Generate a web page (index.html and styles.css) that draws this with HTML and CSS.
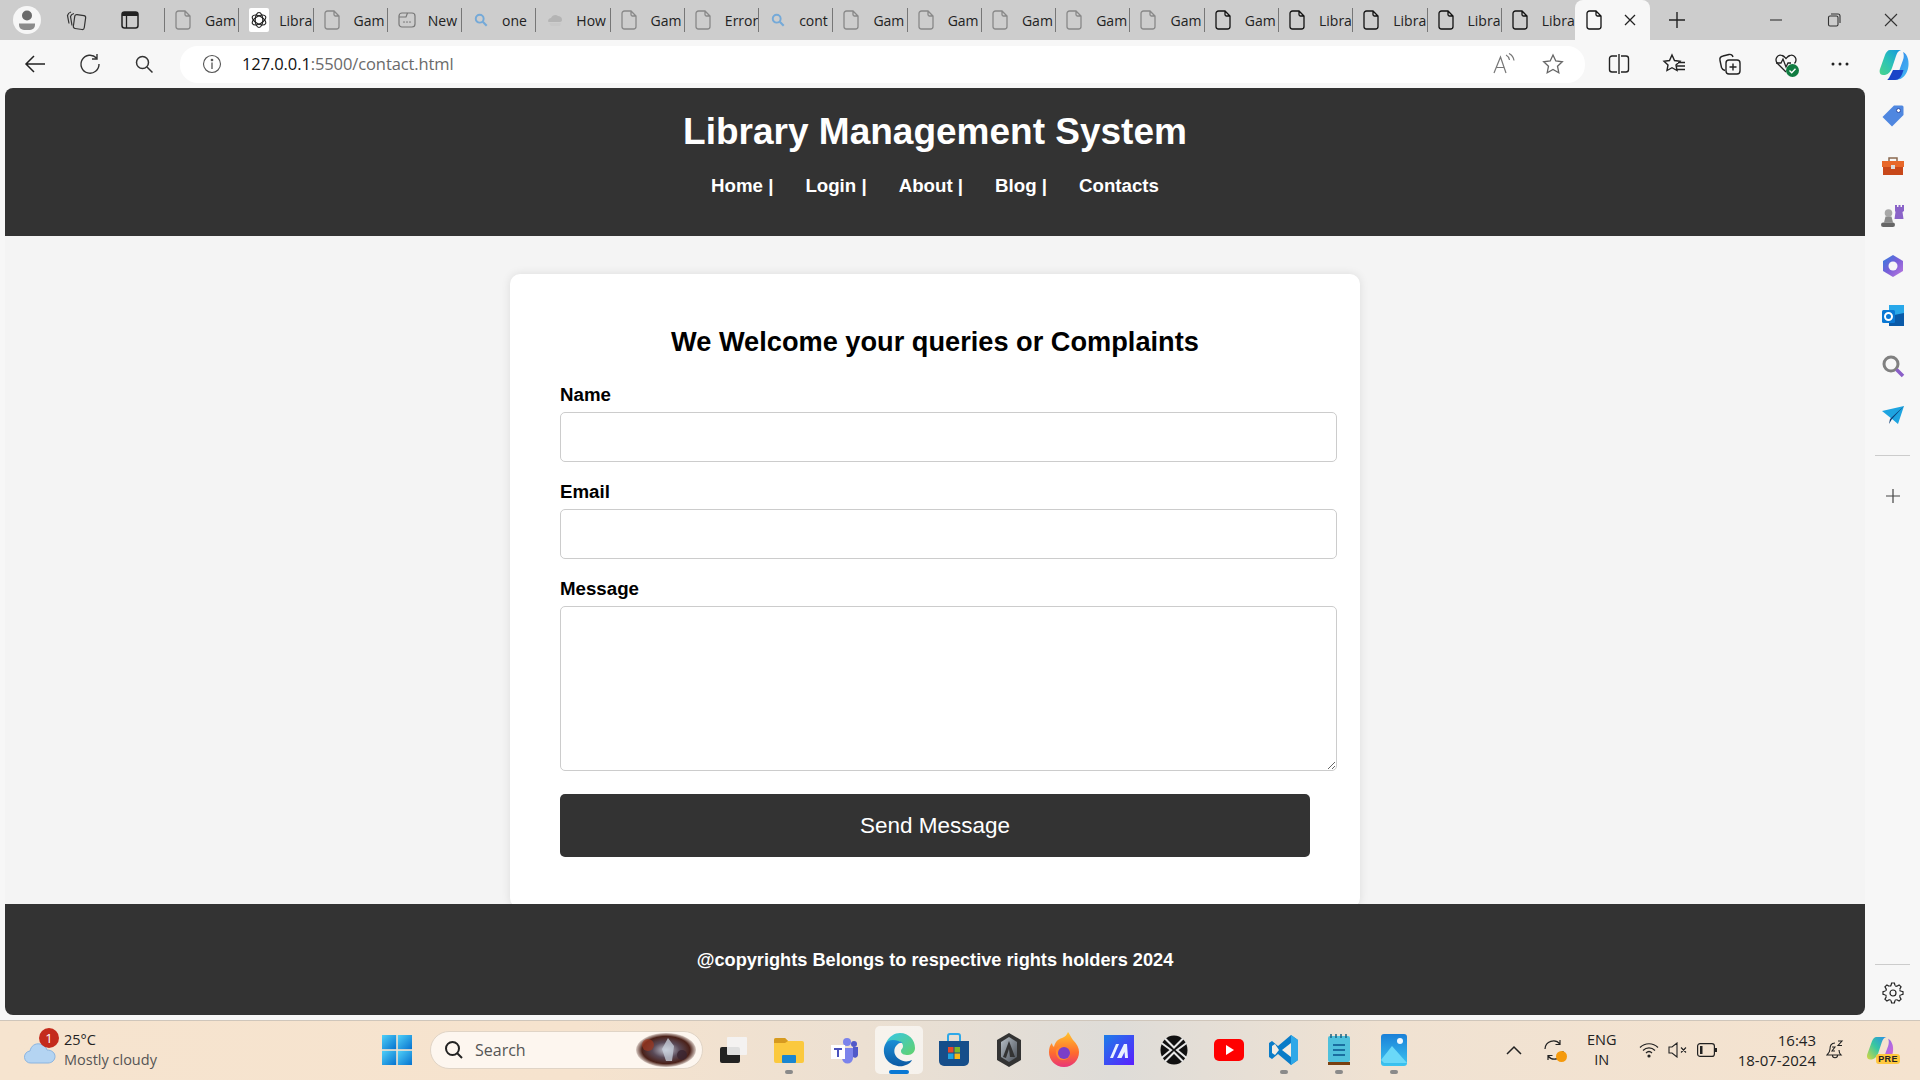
FILE: index.html
```html
<!DOCTYPE html>
<html lang="en">
<head>
  <meta charset="UTF-8" />
  <title>Library Management System</title>
  <link rel="stylesheet" href="styles.css">
</head>
<body>

<svg class="defs">
  <defs>
    <symbol id="doc" viewBox="0 0 16 20"><path d="M3.500 1h6.500l5 5v10.500a2.500 2.500 0 0 1-2.500 2.500h-9A2.500 2.500 0 0 1 1 16.500v-13A2.500 2.500 0 0 1 3.500 1zM10 1v3.500A1.500 1.500 0 0 0 11.500 6H15" fill="none" stroke="currentColor" stroke-width="1.300"/></symbol>
    <symbol id="mag" viewBox="0 0 16 16"><circle cx="6.500" cy="6.500" r="4.500" fill="none" stroke="#74a9d8" stroke-width="2.200"/><path d="M10 10l4.500 4.500" stroke="#74a9d8" stroke-width="2.400"/></symbol>
    <linearGradient id="edgeA" x1="0" y1="0" x2="1" y2="1"><stop offset="0" stop-color="#36c6e8"/><stop offset="1" stop-color="#62d26a"/></linearGradient>
    <linearGradient id="edgeB" x1="0" y1="0" x2="0" y2="1"><stop offset="0" stop-color="#1b8fd6"/><stop offset="1" stop-color="#0c59a4"/></linearGradient>
    <linearGradient id="winG" x1="0" y1="0" x2="1" y2="1"><stop offset="0" stop-color="#4fd0f8"/><stop offset="1" stop-color="#0672cf"/></linearGradient>
    <linearGradient id="copL" x1="1" y1="0" x2="0" y2="1"><stop offset="0" stop-color="#1696e0"/><stop offset=".55" stop-color="#2cc4b4"/><stop offset="1" stop-color="#4cd48c"/></linearGradient>
    <linearGradient id="copR" x1="0" y1="0" x2="1" y2="1"><stop offset="0" stop-color="#2c7ce8"/><stop offset="1" stop-color="#48bcf4"/></linearGradient>
    <linearGradient id="preL" x1="1" y1="0" x2="0" y2="1"><stop offset="0" stop-color="#2a8ce8"/><stop offset=".5" stop-color="#38c8a0"/><stop offset="1" stop-color="#d8d840"/></linearGradient>
    <linearGradient id="preR" x1="0" y1="0" x2="1" y2="1"><stop offset="0" stop-color="#5a70e8"/><stop offset=".6" stop-color="#b868e0"/><stop offset="1" stop-color="#e870b8"/></linearGradient>
    <linearGradient id="m365G" x1="0" y1="0" x2="1" y2="1"><stop offset="0" stop-color="#2e7ee0"/><stop offset=".5" stop-color="#7a5fd8"/><stop offset="1" stop-color="#c07ae0"/></linearGradient>
    <linearGradient id="foxG" x1="0" y1="0" x2="0" y2="1"><stop offset="0" stop-color="#ffc52e"/><stop offset=".6" stop-color="#ff6a2e"/><stop offset="1" stop-color="#e8357a"/></linearGradient>
    <linearGradient id="mG" x1="0" y1="0" x2="1" y2="1"><stop offset="0" stop-color="#1c7ee8"/><stop offset="1" stop-color="#5a1eff"/></linearGradient>
    <linearGradient id="photoG" x1="0" y1="0" x2="0" y2="1"><stop offset="0" stop-color="#1a80d8"/><stop offset="1" stop-color="#3cc4f0"/></linearGradient>
    <linearGradient id="hexG" x1="0" y1="0" x2="1" y2="1"><stop offset="0" stop-color="#b8c0c8"/><stop offset="1" stop-color="#4a5058"/></linearGradient>
    <radialGradient id="searchPic"><stop offset="0" stop-color="#c8ccd8"/><stop offset=".45" stop-color="#5a4a58"/><stop offset=".8" stop-color="#4a2018"/><stop offset="1" stop-color="#4a2018" stop-opacity=".2"/></radialGradient>
  </defs>
</svg>

<div class="tabstrip">
  <div class="strip-left">
    <span class="avatar">
      <svg width="18" height="22" viewBox="0 0 18 22"><circle cx="9" cy="6.500" r="5" fill="#6a6a6a"/><path d="M1 14.500h16v1.500a5 5 0 0 1-5 5H6a5 5 0 0 1-5-5z" fill="#8a8a8a"/></svg>
    </span>
    <svg class="strip-icon" width="22" height="22" viewBox="0 0 22 22" fill="none" stroke="#333" stroke-width="1.200"><rect x="8" y="6" width="11" height="14" rx="2" transform="rotate(8 13 13)"/><path d="M8 4.500c-2 .5-3 1-3.500 3l1.500 9M5 3c-2 .5-3 1.500-3.500 3.500l1.500 8"/></svg>
    <svg class="strip-icon" width="20" height="20" viewBox="0 0 20 20"><rect x="2" y="2" width="16" height="16" rx="2.500" fill="none" stroke="#222" stroke-width="1.500"/><path d="M2 4.500A2.500 2.500 0 0 1 4.500 2h11A2.500 2.500 0 0 1 18 4.500V6H2z" fill="#222"/><path d="M6.500 6v12" stroke="#222" stroke-width="1.300"/></svg>
  </div>
  <div class="tabs">
    <div class="tab"><svg class="fav"><use href="#doc"/></svg><span class="tab-title">Gam</span></div>
    <div class="tab"><span class="fav-gpt"><svg width="18" height="18" viewBox="0 0 18 18" fill="none" stroke="#222" stroke-width="1.100"><ellipse cx="9" cy="9" rx="3.800" ry="7.500"/><ellipse cx="9" cy="9" rx="3.800" ry="7.500" transform="rotate(60 9 9)"/><ellipse cx="9" cy="9" rx="3.800" ry="7.500" transform="rotate(120 9 9)"/></svg></span><span class="tab-title">Libra</span></div>
    <div class="tab"><svg class="fav"><use href="#doc"/></svg><span class="tab-title">Gam</span></div>
    <div class="tab"><svg class="fav-wide" viewBox="0 0 18 18" fill="none" stroke="#777" stroke-width="1.200"><rect x="1" y="2" width="16" height="14" rx="3"/><path d="M1 6h7l1.500-4"/><path d="M5.500 11h1M8.500 11h1M11.500 11h1" stroke-linecap="round"/></svg><span class="tab-title">New</span></div>
    <div class="tab"><svg class="fav-mag"><use href="#mag"/></svg><span class="tab-title">one</span></div>
    <div class="tab"><svg class="fav-wide" viewBox="0 0 18 18" fill="#b4b4b4"><path d="M2 10c0-2 2-3 3-3 1-3 5-4 7-2 2 0 4 1 4 4 0 1-1 2-2 2H4c-1 0-2 0-2-1z"/><path d="M3 12h12l-1 3H5z" fill="#c8c8c8"/></svg><span class="tab-title">How</span></div>
    <div class="tab"><svg class="fav"><use href="#doc"/></svg><span class="tab-title">Gam</span></div>
    <div class="tab"><svg class="fav"><use href="#doc"/></svg><span class="tab-title">Error</span></div>
    <div class="tab"><svg class="fav-mag"><use href="#mag"/></svg><span class="tab-title">cont</span></div>
    <div class="tab"><svg class="fav"><use href="#doc"/></svg><span class="tab-title">Gam</span></div>
    <div class="tab"><svg class="fav"><use href="#doc"/></svg><span class="tab-title">Gam</span></div>
    <div class="tab"><svg class="fav"><use href="#doc"/></svg><span class="tab-title">Gam</span></div>
    <div class="tab"><svg class="fav"><use href="#doc"/></svg><span class="tab-title">Gam</span></div>
    <div class="tab"><svg class="fav"><use href="#doc"/></svg><span class="tab-title">Gam</span></div>
    <div class="tab dark"><svg class="fav"><use href="#doc"/></svg><span class="tab-title">Gam</span></div>
    <div class="tab dark"><svg class="fav"><use href="#doc"/></svg><span class="tab-title">Libra</span></div>
    <div class="tab dark"><svg class="fav"><use href="#doc"/></svg><span class="tab-title">Libra</span></div>
    <div class="tab dark"><svg class="fav"><use href="#doc"/></svg><span class="tab-title">Libra</span></div>
    <div class="tab dark"><svg class="fav"><use href="#doc"/></svg><span class="tab-title">Libra</span></div>
  </div>
  <div class="tab-active">
    <svg class="fav"><use href="#doc"/></svg>
    <svg width="14" height="14" viewBox="0 0 14 14" stroke="#222" stroke-width="1.300"><path d="M2 2l10 10M12 2L2 12"/></svg>
  </div>
  <svg class="new-tab" width="20" height="20" viewBox="0 0 20 20" stroke="#222" stroke-width="1.400"><path d="M10 2v16M2 10h16"/></svg>
  <div class="window-btns">
    <svg width="14" height="14" viewBox="0 0 14 14" stroke="#333" stroke-width="1.100"><path d="M1 7h12"/></svg>
    <svg width="14" height="14" viewBox="0 0 14 14" fill="none" stroke="#333" stroke-width="1.100"><rect x="1.500" y="3" width="9.500" height="10" rx="1.500"/><path d="M4 1h7a2 2 0 0 1 2 2v7"/></svg>
    <svg width="14" height="14" viewBox="0 0 14 14" stroke="#333" stroke-width="1.100"><path d="M1 1l12 12M13 1L1 13"/></svg>
  </div>
</div>

<div class="toolbar">
  <div class="nav-btns">
    <svg width="22" height="20" viewBox="0 0 22 20" fill="none" stroke="#222" stroke-width="1.500"><path d="M21 10H2M10 2l-8 8 8 8"/></svg>
    <svg width="22" height="22" viewBox="0 0 22 22" fill="none" stroke="#333" stroke-width="1.400"><path d="M17.500 5A9 9 0 1 0 20 11M18 1v5h-5"/></svg>
    <svg width="20" height="20" viewBox="0 0 20 20" fill="none" stroke="#333" stroke-width="1.500"><circle cx="8.500" cy="8.500" r="6"/><path d="M13 13l5.500 5.500"/></svg>
  </div>
  <div class="address">
    <svg width="20" height="20" viewBox="0 0 20 20" fill="none" stroke="#555" stroke-width="1.100"><circle cx="10" cy="10" r="8.500"/><path d="M10 8.500V15" stroke-width="1.300"/><circle cx="10" cy="6" r=".8" fill="#555"/></svg>
    <span class="url"><b>127.0.0.1</b>:5500/contact.html</span>
    <svg class="read-aloud" width="24" height="22" viewBox="0 0 24 22" fill="none" stroke="#777" stroke-width="1.200"><path d="M2 20L8.500 4l5.500 16M4.500 14.500h8M14 2c2 1 3 2.500 3.500 5M17 .5c3 1.500 4.500 3.500 5 7"/></svg>
    <svg width="22" height="22" viewBox="0 0 22 22" fill="none" stroke="#666" stroke-width="1.300"><path d="M11 2l2.800 6 6.500.8-4.800 4.400 1.300 6.500L11 16.400 5.200 19.700l1.300-6.500L1.700 8.800 8.200 8z"/></svg>
  </div>
  <div class="tool-btns">
    <svg width="22" height="20" viewBox="0 0 22 20" fill="none" stroke="#222" stroke-width="1.400"><path d="M9 2H4a2.500 2.500 0 0 0-2.500 2.500v11A2.500 2.500 0 0 0 4 18h5M13 2h5a2.500 2.500 0 0 1 2.500 2.500v11A2.500 2.500 0 0 1 18 18h-5M11 0v20"/></svg>
    <svg width="24" height="22" viewBox="0 0 24 22" fill="none" stroke="#222" stroke-width="1.400"><path d="M10 2l2.500 5.500 5.500.7-4 3.800 1 5.500-5-2.800L5 17.500l1-5.500-4-3.800 5.500-.7zM15 13h8M16 9.500h7M15 16.500h8"/></svg>
    <svg width="24" height="24" viewBox="0 0 24 24" fill="none" stroke="#222" stroke-width="1.400"><rect x="8" y="8" width="14" height="14" rx="3"/><path d="M15 11.500v7M11.500 15h7M7 18.500c-2-.5-3-1.500-3.500-3L2 8.500C1.500 6 2.500 4.500 5 4l6-1.500c2-.5 3.500.5 4 2.500"/></svg>
    <span class="heart">
      <svg width="24" height="22" viewBox="0 0 24 22" fill="none" stroke="#222" stroke-width="1.300"><path d="M12 19L3.500 10.500C0 6.500 3.500 1 8 2.500c2 .5 3 2 4 3 1-1 2-2.500 4-3 4.500-1.500 8 4 4.500 8"/><path d="M2 10h5l2-4 3 8 2-4h3"/></svg>
      <svg class="heart-ok" width="13" height="13" viewBox="0 0 13 13"><circle cx="6.500" cy="6.500" r="6.500" fill="#107c41"/><path d="M3.500 6.500l2.200 2.200 3.800-4" fill="none" stroke="#fff" stroke-width="1.400"/></svg>
    </span>
    <svg width="20" height="20" viewBox="0 0 20 20" fill="#222"><circle cx="3" cy="10" r="1.500"/><circle cx="10" cy="10" r="1.500"/><circle cx="17" cy="10" r="1.500"/></svg>
    <svg class="copilot" width="30" height="31" viewBox="0 0 30 31"><path d="M24 3c2.500 1 4 3.500 5 7 1.500 6 0 15-6 19-2 1.500-5 2-11 2 4-2 6-4 8-9l4-11c1-3 1-6 0-8z" fill="url(#copR)"/><path d="M14 21l-3 6c-1 2-2 3.500-3 4h8c4 0 6-3 7.500-7l1-3z" fill="#1a44c8"/><path d="M11 1h11c-3 1-4 3-5 6l-4 12c-1 3-3 6-7 7H4c-3 0-4-3-3-6L6 6c1-3 3-5 5-5z" fill="url(#copL)"/></svg>
  </div>
</div>

<div class="workspace">
  <div class="viewport">
    <header class="site-header">
      <h1>Library Management System</h1>
      <nav class="site-nav">
        <a href="#">Home |</a>
        <a href="#">Login |</a>
        <a href="#">About |</a>
        <a href="#">Blog |</a>
        <a href="#">Contacts</a>
      </nav>
    </header>
    <main class="site-main">
      <form class="contact-card">
        <h2>We Welcome your queries or Complaints</h2>
        <label for="name">Name</label>
        <input id="name" type="text">
        <label for="email">Email</label>
        <input id="email" type="text">
        <label for="message">Message</label>
        <textarea id="message"></textarea>
        <button type="button">Send Message</button>
      </form>
    </main>
    <footer class="site-footer">@copyrights Belongs to respective rights holders 2024</footer>
  </div>

  <aside class="sidebar">
    <svg width="24" height="24" viewBox="0 0 24 24"><path d="M13 1.500h8a1.500 1.500 0 0 1 1.500 1.500v8L11 22.500 1.500 13z" fill="#4f87e0"/><circle cx="17.500" cy="6.500" r="2" fill="#fff" stroke="#2e4fa8"/></svg>
    <svg width="24" height="24" viewBox="0 0 24 24"><path d="M8 7V4h8v3" fill="none" stroke="#8a6a50" stroke-width="1.500"/><path d="M1 7h22v6H1z" fill="#e8682a"/><path d="M2 13h20v8H2z" fill="#c8481a"/><rect x="10" y="11" width="4" height="4" fill="#ddd"/></svg>
    <svg width="24" height="24" viewBox="0 0 24 24"><path d="M14 1h2v2h1.500V1h2v2H21V1h2v6l-1.500 1 1 7h-9l1-7L14 7z" fill="#8a63c8"/><circle cx="7.500" cy="9" r="3.800" fill="#a8a8a8"/><path d="M4.500 12.500h6l1.500 6H3z" fill="#8a8a8a"/><rect x="0" y="18.500" width="14" height="4.500" rx="2.200" fill="#666"/></svg>
    <svg width="24" height="24" viewBox="0 0 24 24"><path d="M12 1l10 6v10l-10 6L2 17V7z" fill="url(#m365G)"/><circle cx="12" cy="12" r="4.500" fill="#f7f7f7"/></svg>
    <svg width="24" height="24" viewBox="0 0 24 24"><path d="M8 1h15v21H8z" fill="#28a8ea"/><path d="M8 12l15-3v13H8z" fill="#0a5aa8"/><rect x="1" y="6" width="13" height="13" rx="1.500" fill="#0a78d4"/><circle cx="7.500" cy="12.500" r="3.500" fill="none" stroke="#fff" stroke-width="2"/></svg>
    <svg width="24" height="24" viewBox="0 0 24 24" fill="none"><circle cx="10" cy="10" r="7" stroke="#808080" stroke-width="3"/><path d="M15.500 15.500l6.500 6.500" stroke="#8a5fc8" stroke-width="3.500"/></svg>
    <svg width="24" height="24" viewBox="0 0 24 24"><path d="M1 7l22-5-6 18-6-5z" fill="#1ea4e0"/><path d="M23 2L9 15l-1 5 3-5z" fill="#0c3f78"/></svg>
    <div class="side-sep"></div>
    <svg class="side-plus" width="16" height="16" viewBox="0 0 16 16" stroke="#444" stroke-width="1.200"><path d="M8 1v14M1 8h14"/></svg>
    <div class="side-bottom">
      <div class="side-sep"></div>
      <svg width="22" height="22" viewBox="0 0 22 22" fill="none" stroke="#222" stroke-width="1.200">
        <circle cx="11" cy="11" r="3"/>
        <circle cx="11" cy="11" r="7.500" stroke-dasharray="1.890 4" stroke-dashoffset="3.890"/>
        <path id="tooth" d="M9 3.500L9.600 1h2.800l.6 2.500"/>
        <use href="#tooth" transform="rotate(45 11 11)"/>
        <use href="#tooth" transform="rotate(90 11 11)"/>
        <use href="#tooth" transform="rotate(135 11 11)"/>
        <use href="#tooth" transform="rotate(180 11 11)"/>
        <use href="#tooth" transform="rotate(225 11 11)"/>
        <use href="#tooth" transform="rotate(270 11 11)"/>
        <use href="#tooth" transform="rotate(315 11 11)"/>
      </svg>
    </div>
  </aside>
</div>

<div class="taskbar">
  <div class="weather">
    <span class="weather-icon">
      <svg width="32" height="22" viewBox="0 0 32 22"><path d="M7 21a6 6 0 0 1-1-12c1-5 5-8 10-7 4 1 6 3 7 6 5 0 8 3 8 6.500S28 21 24 21z" fill="#b4d4f2" stroke="#8ab4e0"/></svg>
      <span class="badge">1</span>
    </span>
    <div class="weather-text"><span>25°C</span><span class="muted">Mostly cloudy</span></div>
  </div>
  <div class="task-center">
    <svg class="win-logo" width="30" height="30" viewBox="0 0 30 30" fill="url(#winG)"><rect width="14.200" height="14.200" x="0" y="0"/><rect width="14.200" height="14.200" x="15.800" y="0"/><rect width="14.200" height="14.200" x="0" y="15.800"/><rect width="14.200" height="14.200" x="15.800" y="15.800"/></svg>
    <div class="search-pill">
      <svg width="20" height="20" viewBox="0 0 20 20" fill="none" stroke="#222" stroke-width="2"><circle cx="8.500" cy="8.500" r="6.500"/><path d="M13 13l5 5"/></svg>
      <span>Search</span>
      <svg class="search-pic" width="60" height="34" viewBox="0 0 60 34"><ellipse cx="30" cy="17" rx="30" ry="17" fill="url(#searchPic)"/><path d="M32 5l6 8-2 15h-6l-4-12z" fill="#c8d0dc" opacity=".75"/><circle cx="12" cy="12" r="6" fill="#a03820" opacity=".7"/><circle cx="46" cy="22" r="5" fill="#3a2430" opacity=".8"/></svg>
    </div>
    <div class="apps">
      <div class="app"><svg width="28" height="26" viewBox="0 0 28 26"><rect x="0" y="10" width="20" height="16" rx="2" fill="#222"/><rect x="7" y="0" width="20" height="18" rx="1" fill="#f4f4f4" opacity=".9"/></svg></div>
      <div class="app dot"><svg width="30" height="26" viewBox="0 0 30 26"><path d="M0 3a2 2 0 0 1 2-2h9l3 3h14a2 2 0 0 1 2 2v18a2 2 0 0 1-2 2H2a2 2 0 0 1-2-2z" fill="#fbc93e"/><path d="M0 3a2 2 0 0 1 2-2h9l3 3-3 2H0z" fill="#d69a20"/><rect x="8" y="18" width="14" height="8" rx="1" fill="#1a86d0"/></svg></div>
      <div class="app"><svg width="28" height="28" viewBox="0 0 28 28"><circle cx="17" cy="6" r="4" fill="#7b83eb"/><circle cx="24" cy="8" r="3" fill="#5059c9"/><path d="M12 12h11v10a5 5 0 0 1-11 0z" fill="#7b83eb"/><path d="M23 11h5v8a3 3 0 0 1-5 2z" fill="#5059c9"/><rect x="1" y="9" width="14" height="14" fill="#fff"/><path d="M4 12h8v2H9v7H7v-7H4z" fill="#4b53bc"/></svg></div>
      <div class="app active"><svg width="32" height="34" viewBox="0 0 32 34"><path d="M3 10C6 3 12 0 17 0c9 0 15 7 15 15 0 4-3 7-7 7-4 0-7-1-7-4 0-2 2-2 2-5 0-3-3-5-7-5-4 0-8 1-10 2z" fill="url(#edgeA)"/><path d="M3 10C0 14 0 22 4 27c4 5 11 7 16 6 4-1 8-3 9-6-4 2-9 2-13-1-5-3-6-9-3-13 2-3 5-4 7-3-4-3-14-5-17 0z" fill="url(#edgeB)"/></svg></div>
      <div class="app"><svg width="30" height="34" viewBox="0 0 30 34"><path d="M9 8V3a2 2 0 0 1 2-2h8a2 2 0 0 1 2 2v5" fill="none" stroke="#2ea8e8" stroke-width="2"/><path d="M0 8h30v20a5 5 0 0 1-5 5H5a5 5 0 0 1-5-5z" fill="#164e8a"/><rect x="9" y="14" width="5.500" height="5.500" fill="#e8482a"/><rect x="15.500" y="14" width="5.500" height="5.500" fill="#7cb828"/><rect x="9" y="20.500" width="5.500" height="5.500" fill="#1ea4e0"/><rect x="15.500" y="20.500" width="5.500" height="5.500" fill="#f8b818"/></svg></div>
      <div class="app"><svg width="28" height="34" viewBox="0 0 28 34"><path d="M14 0l12 7v20l-12 7L2 27V7z" fill="#333"/><path d="M14 4l8 5v15l-8 5-8-5V9z" fill="url(#hexG)"/><path d="M14 8l6 16h-5l-1-8-3 9-3-1z" fill="#333"/></svg></div>
      <div class="app"><svg width="30" height="36" viewBox="0 0 30 36"><path d="M15 35C6 35 0 28 0 20c0-4 1-7 3-9 0 2 1 3 2 4 1-5 4-8 8-9 3-1 5-3 6-6 2 3 3 5 5 8 4 4 6 8 6 12 0 8-6 15-15 15z" fill="url(#foxG)"/><path d="M7 18c3-5 10-5 13-1 3 5 0 11-6 11-5 0-8-5-7-10z" fill="#ff8a2e"/><circle cx="15" cy="21" r="6" fill="#7a3ec8"/></svg></div>
      <div class="app"><svg width="30" height="30" viewBox="0 0 30 30"><rect width="30" height="30" fill="url(#mG)"/><path d="M6 23l6-14h3l-6 14zM13 23l7-14h3l1 14h-3l-.5-6-3 6z" fill="#e8f0ff"/></svg></div>
      <div class="app"><svg width="28" height="30" viewBox="0 0 28 30"><ellipse cx="14" cy="15" rx="13.500" ry="14.500" fill="#111"/><path d="M5 3.500l9 9 9-9M5 26.500l9-9 9 9M1.500 8l9.500 7-9.500 8M26.500 8L17 15l9.500 8" fill="none" stroke="#e8e8e8" stroke-width="2"/></svg></div>
      <div class="app"><svg width="30" height="22" viewBox="0 0 30 22"><rect width="30" height="22" rx="5" fill="#f00"/><path d="M12 6l8 5-8 5z" fill="#fff"/></svg></div>
      <div class="app dot"><svg width="30" height="30" viewBox="0 0 30 30"><path d="M22 0l7 5v20l-7 5-13-11-6 5-3-2V8l3-2 6 5z" fill="#0a7cc8"/><path d="M22 0l7 5v20l-7 5z" fill="#2ea8e8"/><path d="M22 8L13 15l9 7z" fill="#f4ece2"/><path d="M3 11l3-2 4 6-4 5-3-2z" fill="#f4ece2"/></svg></div>
      <div class="app dot"><svg width="22" height="32" viewBox="0 0 22 32"><rect x="0" y="2" width="22" height="26" rx="2" fill="#4fc0dc"/><rect x="0" y="28" width="22" height="3" fill="#7a4010"/><path d="M5 10h12v2H5zM5 15h12v2H5zM5 20h12v2H5z" fill="#1a6ea0"/><path d="M3 0v4M8 0v4M13 0v4M18 0v4" stroke="#1a6080" stroke-width="1.500"/></svg></div>
      <div class="app dot"><svg width="26" height="32" viewBox="0 0 26 32"><rect width="26" height="32" rx="3" fill="url(#photoG)"/><path d="M0 26l11-14 15 17v0H3z" fill="#6ad8f8"/><circle cx="19" cy="7" r="3" fill="#f0f8ff"/></svg></div>
    </div>
  </div>
  <div class="tray">
    <svg class="tray-chevron" width="16" height="10" viewBox="0 0 16 10" fill="none" stroke="#222" stroke-width="1.500"><path d="M1 9l7-7 7 7"/></svg>
    <span class="sync">
      <svg width="22" height="22" viewBox="0 0 22 22" fill="none" stroke="#222" stroke-width="1.200"><path d="M2 10A8.500 8.500 0 0 1 17 5M17 1v4.500h-4.500M20 12A8.500 8.500 0 0 1 5 17M5 21v-4.500h4.500"/></svg>
      <i class="sync-dot"></i>
    </span>
    <div class="lang"><span>ENG</span><span>IN</span></div>
    <svg class="tray-wifi" width="20" height="16" viewBox="0 0 20 16" fill="none" stroke="#222" stroke-width="1.200"><path d="M1 5.500c5-5 13-5 18 0M4 8.500c3.500-3.500 8.500-3.500 12 0M7 11c1.800-1.800 4.200-1.800 6 0"/><circle cx="10" cy="14" r="1" fill="#222"/></svg>
    <svg class="tray-mute" width="20" height="16" viewBox="0 0 20 16" fill="none" stroke="#222" stroke-width="1.100"><path d="M1 5v6h3l5 4V1L4 5zM13 5.500l5 5M18 5.500l-5 5"/></svg>
    <svg class="tray-mute" width="20" height="14" viewBox="0 0 20 14"><rect x=".6" y=".6" width="16.800" height="12.800" rx="2.500" fill="none" stroke="#222" stroke-width="1.200"/><rect x="3" y="3" width="2.500" height="8" fill="#222"/><rect x="18" y="5" width="2" height="4" fill="#222"/></svg>
    <div class="clock"><span>16:43</span><span>18-07-2024</span></div>
    <svg class="tray-bell" width="18" height="20" viewBox="0 0 18 20" fill="none" stroke="#222" stroke-width="1.100"><path d="M9 3C5 3 4 6 4 9c0 3-2 5-3 6h14c-1-1-2-2.500-2-5M6.500 15.500c0 3 5 3 5 0"/><path d="M6 7h3l-3 4h3M12 1h4l-4 4.500h4"/></svg>
    <span class="copilot-pre">
      <svg width="30" height="28" viewBox="0 0 30 31"><path d="M24 3c2.500 1 4 3.500 5 7 1.500 6 0 15-6 19-2 1.500-5 2-11 2 4-2 6-4 8-9l4-11c1-3 1-6 0-8z" fill="url(#preR)"/><path d="M11 1h11c-3 1-4 3-5 6l-4 12c-1 3-3 6-7 7H4c-3 0-4-3-3-6L6 6c1-3 3-5 5-5z" fill="url(#preL)"/></svg>
      <b class="pre">PRE</b>
    </span>
  </div>
</div>

</body>
</html>
```

FILE: styles.css
```css
html, body {
  margin: 0;
  padding: 0;
  height: 100%;
  overflow: hidden;
}

body {
  width: 1920px;
  height: 1080px;
  display: flex;
  flex-direction: column;
  background: #f7f7f7;
  font-family: "Liberation Sans", Arial, sans-serif;
}

.defs {
  position: absolute;
  width: 0;
  height: 0;
}

svg {
  display: block;
  flex-shrink: 0;
}

/* browser chrome */
.tabstrip {
  height: 40px;
  flex-shrink: 0;
  display: flex;
  align-items: center;
  background: #cdcdcd;
  font-family: "Open Sans", sans-serif;
  font-size: 14px;
  color: #222;
}

.strip-left {
  width: 164px;
  flex-shrink: 0;
  display: flex;
  align-items: center;
  padding-left: 13px;
  box-sizing: border-box;
}

.avatar {
  width: 28px;
  height: 28px;
  border-radius: 50%;
  background: #f6f6f6;
  display: flex;
  align-items: center;
  justify-content: center;
}

.strip-icon {
  margin-left: 25px;
}

.strip-icon + .strip-icon {
  margin-left: 32px;
}

.tabs {
  width: 1411px;
  flex-shrink: 0;
  display: flex;
  height: 100%;
  align-items: center;
}

.tab {
  flex: 1;
  min-width: 0;
  height: 24px;
  display: flex;
  align-items: center;
  border-left: 1px solid #777;
  box-sizing: border-box;
  color: #888;
  padding-left: 10px;
}

.tab.dark {
  color: #111;
}

.fav {
  width: 16px;
  height: 20px;
  margin-right: 14px;
  color: inherit;
}

.fav-wide {
  width: 18px;
  height: 18px;
  margin-right: 12px;
}

.fav-mag {
  width: 14px;
  height: 14px;
  margin: 0 14px 0 2px;
}

.fav-gpt {
  width: 20px;
  height: 24px;
  margin-right: 10px;
  flex-shrink: 0;
  background: #fff;
  border-radius: 2px;
  display: flex;
  align-items: center;
  justify-content: center;
}

.tab-title {
  color: #222;
  white-space: nowrap;
}

.tab-active {
  width: 75px;
  height: 40px;
  flex-shrink: 0;
  background: #f7f7f7;
  border-radius: 8px 8px 0 0;
  display: flex;
  align-items: center;
  padding-left: 11px;
  box-sizing: border-box;
  color: #111;
}

.tab-active .fav {
  margin-right: 21px;
}

.new-tab {
  margin-left: 17px;
}

.window-btns {
  margin-left: auto;
  width: 151px;
  padding-right: 22px;
  box-sizing: border-box;
  display: flex;
  justify-content: space-between;
}

.toolbar {
  height: 48px;
  flex-shrink: 0;
  display: flex;
  align-items: center;
  background: #f7f7f7;
}

.nav-btns {
  width: 180px;
  flex-shrink: 0;
  box-sizing: border-box;
  display: flex;
  align-items: center;
  padding-left: 24px;
  gap: 33px;
}

.address {
  width: 1405px;
  height: 37px;
  flex-shrink: 0;
  box-sizing: border-box;
  background: #fff;
  border-radius: 18px;
  display: flex;
  align-items: center;
  padding-left: 22px;
  padding-right: 21px;
  font-family: "Open Sans", sans-serif;
  font-size: 16.500px;
  color: #6a6a6a;
}

.url {
  margin-left: 20px;
  margin-top: -1px;
  letter-spacing: -0.1px;
}

.url b {
  font-weight: 400;
  color: #111;
}

.read-aloud {
  margin-left: auto;
  margin-right: 26px;
}

.tool-btns {
  flex: 1;
  display: flex;
  align-items: center;
  padding-left: 23px;
  gap: 32px;
}

.heart {
  position: relative;
}

.heart-ok {
  position: absolute;
  right: -1px;
  bottom: -2px;
}

.copilot {
  margin-left: -3px;
}

.workspace {
  height: 932px;
  flex-shrink: 0;
  display: flex;
}

/* the page itself */
.viewport {
  width: 1860px;
  height: 927px;
  margin-left: 5px;
  flex-shrink: 0;
  display: flex;
  flex-direction: column;
  border-radius: 8px;
  overflow: hidden;
  background: #f4f4f4;
}

.site-header {
  height: 148px;
  flex-shrink: 0;
  box-sizing: border-box;
  background: #333;
  color: #fff;
  padding-top: 22px;
  text-align: center;
}

h1 {
  margin: 0;
  font-size: 37px;
  line-height: 44px;
}

.site-nav {
  margin-top: 21px;
  display: flex;
  justify-content: center;
  gap: 32px;
  font-size: 18.700px;
  line-height: 22px;
  font-weight: bold;
}

.site-nav a {
  color: #fff;
  text-decoration: none;
}

.site-main {
  flex: 1;
  min-height: 0;
}

.contact-card {
  width: 850px;
  height: 634px;
  box-sizing: border-box;
  margin: 38px auto 0;
  padding: 50px 50px 0;
  background: #fff;
  border-radius: 10px;
  box-shadow: 0 0 10px rgba(0, 0, 0, 0.1);
}

h2 {
  margin: 0 0 24px;
  text-align: center;
  font-size: 27.200px;
  line-height: 36px;
  color: #000;
}

label {
  display: block;
  font-size: 18.700px;
  line-height: 22px;
  font-weight: bold;
  color: #000;
}

input, textarea {
  display: block;
  width: 100%;
  box-sizing: content-box;
  padding: 12px 12.500px;
  margin: 6px 0 19px;
  border: 1px solid #ccc;
  border-radius: 5px;
  background: #fff;
  font-family: "Liberation Sans", sans-serif;
  font-size: 16px;
}

input {
  height: 24px;
}

textarea {
  height: 139px;
  margin-bottom: 23px;
}

button {
  display: block;
  width: 100%;
  height: 63px;
  border: 0;
  border-radius: 5px;
  background: #333;
  color: #fff;
  font-family: "Liberation Sans", sans-serif;
  font-size: 22.500px;
}

.site-footer {
  height: 111px;
  flex-shrink: 0;
  box-sizing: border-box;
  padding-top: 2px;
  position: relative;
  background: #333;
  color: #fff;
  display: flex;
  align-items: center;
  justify-content: center;
  font-size: 18.200px;
  font-weight: bold;
}

/* edge sidebar */
.sidebar {
  flex: 1;
  height: 932px;
  box-sizing: border-box;
  display: flex;
  flex-direction: column;
  align-items: center;
  padding: 16px 0 16px;
  gap: 26px;
}

.side-sep {
  width: 35px;
  height: 1px;
  margin-top: 1px;
  background: #ccc;
}

.side-plus {
  margin-top: 6px;
}

.side-bottom {
  margin-top: auto;
  display: flex;
  flex-direction: column;
  align-items: center;
  gap: 17px;
}

/* windows taskbar */
.taskbar {
  height: 60px;
  flex-shrink: 0;
  box-sizing: border-box;
  border-top: 1px solid #cfc6bb;
  padding-bottom: 1px;
  display: flex;
  align-items: center;
  background: linear-gradient(90deg, #f6e4cf 0%, #f6e3ce 30%, #ece0d2 45%, #dedcd8 58%, #f0e2d2 72%, #f5e3cf 100%);
  font-family: "Open Sans", sans-serif;
  font-size: 14.500px;
  color: #222;
}

.weather {
  width: 382px;
  flex-shrink: 0;
  box-sizing: border-box;
  padding-left: 24px;
  display: flex;
  align-items: center;
}

.weather-icon {
  position: relative;
  width: 40px;
  height: 44px;
  box-sizing: border-box;
  padding-bottom: 8px;
  display: flex;
  align-items: flex-end;
}

.badge {
  position: absolute;
  left: 15px;
  top: 0;
  width: 20px;
  height: 20px;
  border-radius: 50%;
  background: #c42b1c;
  color: #fff;
  font-size: 13px;
  line-height: 20px;
  text-align: center;
}

.weather-text {
  display: flex;
  flex-direction: column;
  line-height: 20px;
}

.muted {
  color: #555;
}

.task-center {
  display: flex;
  align-items: center;
}

.search-pill {
  width: 273px;
  height: 38px;
  margin-left: 18px;
  box-sizing: border-box;
  padding-left: 13px;
  background: #fdf6ef;
  border: 1px solid #e0d4c6;
  border-radius: 19px;
  display: flex;
  align-items: center;
  font-size: 16px;
  color: #555;
}

.search-pill span {
  margin-left: 11px;
}

.search-pic {
  margin-left: auto;
  margin-right: 6px;
}

.apps {
  display: flex;
  margin-left: 3px;
}

.app {
  position: relative;
  width: 55px;
  height: 48px;
  display: flex;
  align-items: center;
  justify-content: center;
  border-radius: 5px;
}

.app.active {
  width: 48px;
  margin: 0 3.500px;
  background: rgba(255, 255, 255, 0.6);
}

.app.dot::after,
.app.active::after {
  content: "";
  position: absolute;
  left: 50%;
  bottom: 0;
  width: 8px;
  height: 4px;
  margin-left: -4px;
  border-radius: 2px;
  background: #8a8a8a;
}

.app.active::after {
  width: 20px;
  margin-left: -10px;
  background: #0a78d4;
}

.tray {
  margin-left: auto;
  display: flex;
  align-items: center;
  padding-right: 25px;
}

.sync {
  position: relative;
  margin-left: 21px;
}

.sync-dot {
  position: absolute;
  right: -2px;
  bottom: -1px;
  width: 11px;
  height: 11px;
  border-radius: 50%;
  background: #f59a0c;
}

.lang {
  width: 46px;
  margin: 0 14px;
  display: flex;
  flex-direction: column;
  align-items: center;
  line-height: 20px;
}

.tray-mute {
  margin-left: 9px;
}

.clock {
  display: flex;
  flex-direction: column;
  align-items: flex-end;
  font-size: 15px;
  line-height: 20px;
  margin-left: 21px;
}

.tray-bell {
  margin-left: 10px;
}

.copilot-pre {
  position: relative;
  margin-left: 21px;
}

.pre {
  position: absolute;
  right: -5px;
  bottom: 0;
  width: 24px;
  height: 10px;
  border-radius: 3px;
  background: #ffc83d;
  font-family: "Liberation Sans", sans-serif;
  font-size: 9px;
  line-height: 10px;
  letter-spacing: 0.3px;
  text-align: center;
  color: #222;
}
```
